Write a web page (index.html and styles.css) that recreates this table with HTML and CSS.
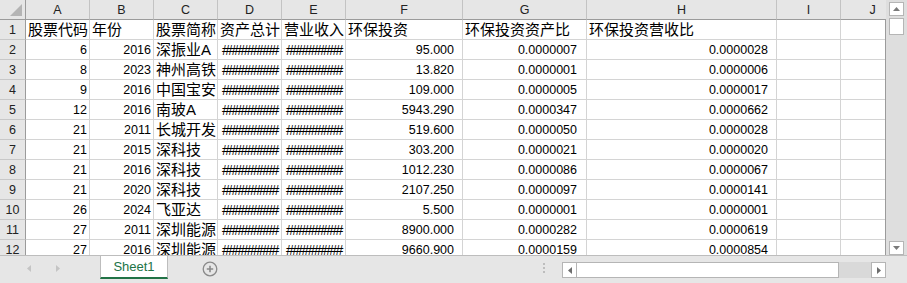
FILE: index.html
```html
<!DOCTYPE html>
<html lang="zh">
<head>
<meta charset="utf-8">
<title>Sheet1</title>
<link rel="stylesheet" href="styles.css">
</head>
<body>
<div class="app">
  <div class="sheet">
    <div class="colhead">
      <div class="corner"><svg width="25" height="19" viewBox="0 0 25 19"><polygon points="22,4 22,16 10,16" fill="#b4b4b4"/></svg></div>
      <div class="ch">A</div><div class="ch">B</div><div class="ch">C</div><div class="ch">D</div><div class="ch">E</div>
      <div class="ch">F</div><div class="ch">G</div><div class="ch">H</div><div class="ch">I</div><div class="ch">J</div>
    </div>
    <div class="body">
      <div class="rh">1</div><div class="c t">股票代码</div><div class="c t">年份</div><div class="c t">股票简称</div><div class="c t">资产总计</div><div class="c t">营业收入</div><div class="c t">环保投资</div><div class="c t">环保投资资产比</div><div class="c t">环保投资营收比</div><div class="c"></div><div class="c"></div>

      <div class="rh">2</div><div class="c n">6</div><div class="c n">2016</div><div class="c t">深振业A</div><div class="c h">#########</div><div class="c h">#########</div><div class="c n f">95.000</div><div class="c n g">0.0000007</div><div class="c n f">0.0000028</div><div class="c"></div><div class="c"></div>

      <div class="rh">3</div><div class="c n">8</div><div class="c n">2023</div><div class="c t">神州高铁</div><div class="c h">#########</div><div class="c h">#########</div><div class="c n f">13.820</div><div class="c n g">0.0000001</div><div class="c n f">0.0000006</div><div class="c"></div><div class="c"></div>

      <div class="rh">4</div><div class="c n">9</div><div class="c n">2016</div><div class="c t">中国宝安</div><div class="c h">#########</div><div class="c h">#########</div><div class="c n f">109.000</div><div class="c n g">0.0000005</div><div class="c n f">0.0000017</div><div class="c"></div><div class="c"></div>

      <div class="rh">5</div><div class="c n">12</div><div class="c n">2016</div><div class="c t">南玻A</div><div class="c h">#########</div><div class="c h">#########</div><div class="c n f">5943.290</div><div class="c n g">0.0000347</div><div class="c n f">0.0000662</div><div class="c"></div><div class="c"></div>

      <div class="rh">6</div><div class="c n">21</div><div class="c n">2011</div><div class="c t">长城开发</div><div class="c h">#########</div><div class="c h">#########</div><div class="c n f">519.600</div><div class="c n g">0.0000050</div><div class="c n f">0.0000028</div><div class="c"></div><div class="c"></div>

      <div class="rh">7</div><div class="c n">21</div><div class="c n">2015</div><div class="c t">深科技</div><div class="c h">#########</div><div class="c h">#########</div><div class="c n f">303.200</div><div class="c n g">0.0000021</div><div class="c n f">0.0000020</div><div class="c"></div><div class="c"></div>

      <div class="rh">8</div><div class="c n">21</div><div class="c n">2016</div><div class="c t">深科技</div><div class="c h">#########</div><div class="c h">#########</div><div class="c n f">1012.230</div><div class="c n g">0.0000086</div><div class="c n f">0.0000067</div><div class="c"></div><div class="c"></div>

      <div class="rh">9</div><div class="c n">21</div><div class="c n">2020</div><div class="c t">深科技</div><div class="c h">#########</div><div class="c h">#########</div><div class="c n f">2107.250</div><div class="c n g">0.0000097</div><div class="c n f">0.0000141</div><div class="c"></div><div class="c"></div>

      <div class="rh">10</div><div class="c n">26</div><div class="c n">2024</div><div class="c t">飞亚达</div><div class="c h">#########</div><div class="c h">#########</div><div class="c n f">5.500</div><div class="c n g">0.0000001</div><div class="c n f">0.0000001</div><div class="c"></div><div class="c"></div>

      <div class="rh">11</div><div class="c n">27</div><div class="c n">2011</div><div class="c t">深圳能源</div><div class="c h">#########</div><div class="c h">#########</div><div class="c n f">8900.000</div><div class="c n g">0.0000282</div><div class="c n f">0.0000619</div><div class="c"></div><div class="c"></div>

      <div class="rh">12</div><div class="c n">27</div><div class="c n">2016</div><div class="c t">深圳能源</div><div class="c h">#########</div><div class="c h">#########</div><div class="c n f">9660.900</div><div class="c n g">0.0000159</div><div class="c n f">0.0000854</div><div class="c"></div><div class="c"></div>
    </div>
  </div>

  <div class="vscroll">
    <div class="vbtn"><svg width="7" height="4" viewBox="0 0 7 4"><polygon points="3.5,0 7,4 0,4" fill="#7a7a7a"/></svg></div>
    <div class="vthumb"></div>
    <div class="vbtn vdown"><svg width="7" height="4" viewBox="0 0 7 4"><polygon points="0,0 7,0 3.5,4" fill="#7a7a7a"/></svg></div>
  </div>

  <div class="tabbar">
    <div class="nav">
      <svg width="100" height="26" viewBox="0 0 100 26"><polygon points="31,9 31,16 27,12.5" fill="#c4c4c4"/><polygon points="56,9 56,16 60,12.5" fill="#c4c4c4"/></svg>
    </div>
    <div class="tab">Sheet1</div>
    <div class="mid">
      <svg class="plus" width="16" height="16" viewBox="0 0 16 16"><circle cx="8" cy="8" r="6.8" fill="none" stroke="#8a8a8a" stroke-width="1.3"/><path d="M8 4.8V11.2M4.8 8H11.2" stroke="#8a8a8a" stroke-width="1.6"/></svg>
      <svg class="dots" width="2" height="10" viewBox="0 0 2 10"><rect x="0" y="0" width="2" height="2" fill="#bdbdbd"/><rect x="0" y="4" width="2" height="2" fill="#bdbdbd"/><rect x="0" y="8" width="2" height="2" fill="#bdbdbd"/></svg>
    </div>
    <div class="hscroll">
      <div class="hbtn"><svg width="4" height="7" viewBox="0 0 4 7"><polygon points="4,0 4,7 0,3.5" fill="#6d6d6d"/></svg></div>
      <div class="hthumb"></div>
      <div class="htrack"></div>
      <div class="hbtn hright"><svg width="4" height="7" viewBox="0 0 4 7"><polygon points="0,0 0,7 4,3.5" fill="#6d6d6d"/></svg></div>
    </div>
    <div class="corner-fill"></div>
  </div>
</div>
</body>
</html>
```

FILE: styles.css
```css
html, body {
  margin: 0;
  padding: 0;
}

body {
  width: 907px;
  height: 283px;
  overflow: hidden;
  background: #e6e6e6;
  font-family: "Liberation Sans", "Noto Sans CJK SC", sans-serif;
  color: #000;
}

.app {
  display: grid;
  grid-template-columns: 886px 21px;
  grid-template-rows: 255px 28px;
  width: 907px;
  height: 283px;
}

/* ---------- sheet ---------- */
.sheet {
  display: flex;
  flex-direction: column;
  overflow: hidden;
  background: #fff;
}

.colhead,
.body {
  display: grid;
  grid-template-columns: 26px 64px 64px 64px 64px 64px 117px 124px 190px 64px 64px;
  grid-auto-rows: 20px;
  width: 886px;
  overflow: hidden;
}

.colhead {
  flex: none;
  height: 20px;
  background: #e6e6e6;
}

.body {
  flex: 1;
  box-sizing: border-box;
  border-right: 1px solid #9b9b9b;
  align-content: start;
}

.corner {
  box-sizing: border-box;
  background: #e6e6e6;
  border-right: 1px solid #9b9b9b;
  border-bottom: 1px solid #9b9b9b;
}

.corner svg {
  display: block;
}

.ch {
  box-sizing: border-box;
  background: #e6e6e6;
  border-right: 1px solid #c3c3c3;
  border-bottom: 1px solid #9b9b9b;
  text-align: center;
  font-size: 12.5px;
  line-height: 19px;
  padding-top: 1px;
  color: #222;
  overflow: hidden;
  white-space: nowrap;
}

.rh {
  box-sizing: border-box;
  background: #e6e6e6;
  border-right: 1px solid #9b9b9b;
  border-bottom: 1px solid #c8c8c8;
  text-align: center;
  font-size: 12.5px;
  line-height: 19px;
  padding-top: 1px;
  color: #222;
  overflow: hidden;
  white-space: nowrap;
}

.c {
  box-sizing: border-box;
  border-right: 1px solid #d4d4d4;
  border-bottom: 1px solid #d4d4d4;
  padding: 1px 2px 0 2px;
  font-size: 12.5px;
  line-height: 19px;
  overflow: hidden;
  white-space: nowrap;
}

.t {
  font-size: 15px;
  padding-top: 0;
}

.n {
  text-align: right;
}

.f {
  padding-right: 8px;
}

.g {
  padding-right: 9px;
}

.h {
  font-size: 14px;
  letter-spacing: -1.6px;
  text-align: left;
  padding: 1px 0 0 4px;
}

/* ---------- vertical scrollbar ---------- */
.vscroll {
  display: flex;
  flex-direction: column;
  box-sizing: border-box;
  padding: 2px 3px 0 3px;
  background: #dedede;
}

.vbtn {
  flex: none;
  height: 14px;
  box-sizing: border-box;
  border: 1px solid #b5b5b5;
  background: #fff;
  display: flex;
  align-items: center;
  justify-content: center;
}

.vbtn svg {
  display: block;
}

.vthumb {
  flex: none;
  height: 17px;
  margin-top: 2px;
  box-sizing: border-box;
  border: 1px solid #b5b5b5;
  background: #fff;
}

.vdown {
  margin-top: auto;
}

/* ---------- tab bar ---------- */
.tabbar {
  grid-column: 1 / -1;
  display: grid;
  grid-template-columns: 100px 68px 1fr 324px 21px;
  box-sizing: border-box;
  border-top: 1px solid #bdbdbd;
  background: #e6e6e6;
  height: 28px;
}

.nav svg {
  display: block;
}

.tab {
  align-self: start;
  height: 23px;
  box-sizing: border-box;
  background: #fff;
  border-left: 1px solid #bdbdbd;
  border-right: 1px solid #bdbdbd;
  border-bottom: 2px solid #217346;
  color: #217346;
  font-size: 13px;
  line-height: 20px;
  padding-top: 1px;
  text-align: center;
}

.mid {
  display: flex;
  align-items: flex-start;
}

.plus {
  display: block;
  margin: 5px 0 0 34px;
}

.dots {
  display: block;
  margin: 7px 17px 0 auto;
}

.hscroll {
  display: flex;
  margin-top: 6px;
  height: 16px;
}

.hbtn {
  flex: none;
  width: 15px;
  height: 16px;
  box-sizing: border-box;
  border: 1px solid #b5b5b5;
  background: #fff;
  display: flex;
  align-items: center;
  justify-content: center;
}

.hbtn svg {
  display: block;
}

.hthumb {
  flex: none;
  width: 262px;
  height: 16px;
  box-sizing: border-box;
  border: 1px solid #b5b5b5;
  border-left: 0;
  background: #fff;
}

.htrack {
  flex: 1;
  height: 16px;
  background: #d9d9d9;
}
```
